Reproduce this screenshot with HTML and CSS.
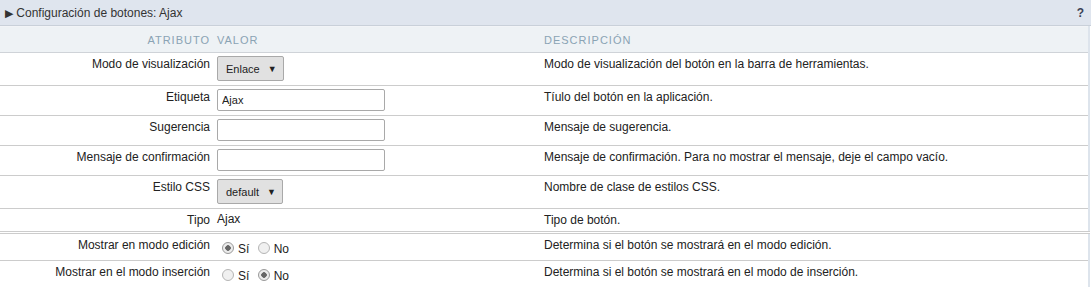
FILE: index.html
```html
<!DOCTYPE html>
<html lang="es">
<head>
    <meta charset="UTF-8">
    <title>Configuración de botones</title>
    <link rel="stylesheet" href="styles.css">
</head>
<body>
    <div class="panel">
        <div class="panel-title">
            <span class="caption"><span class="arrow">&#9654;</span> Configuración de botones: Ajax</span>
            <span class="help">?</span>
        </div>

        <table class="props">
            <thead>
                <tr>
                    <th class="col-attr">Atributo</th>
                    <th class="col-val">Valor</th>
                    <th class="col-desc">Descripción</th>
                </tr>
            </thead>
            <tbody>
                <tr>
                    <td class="col-attr">Modo de visualización</td>
                    <td class="col-val"><span class="select">Enlace <span class="caret">&#9660;</span></span></td>
                    <td class="col-desc">Modo de visualización del botón en la barra de herramientas.</td>
                </tr>
                <tr>
                    <td class="col-attr">Etiqueta</td>
                    <td class="col-val"><input class="text" type="text" value="Ajax"></td>
                    <td class="col-desc">Tíulo del botón en la aplicación.</td>
                </tr>
                <tr>
                    <td class="col-attr">Sugerencia</td>
                    <td class="col-val"><input class="text" type="text" value=""></td>
                    <td class="col-desc">Mensaje de sugerencia.</td>
                </tr>
                <tr>
                    <td class="col-attr">Mensaje de confirmación</td>
                    <td class="col-val"><input class="text" type="text" value=""></td>
                    <td class="col-desc">Mensaje de confirmación. Para no mostrar el mensaje, deje el campo vacío.</td>
                </tr>
                <tr>
                    <td class="col-attr">Estilo CSS</td>
                    <td class="col-val"><span class="select">default <span class="caret">&#9660;</span></span></td>
                    <td class="col-desc">Nombre de clase de estilos CSS.</td>
                </tr>
                <tr>
                    <td class="col-attr">Tipo</td>
                    <td class="col-val">Ajax</td>
                    <td class="col-desc">Tipo de botón.</td>
                </tr>
                <tr class="split radios">
                    <td class="col-attr">Mostrar en modo edición</td>
                    <td class="col-val">
                        <label class="radio"><span class="dot on"></span>Sí</label>
                        <label class="radio"><span class="dot"></span>No</label>
                    </td>
                    <td class="col-desc">Determina si el botón se mostrará en el modo edición.</td>
                </tr>
                <tr class="radios">
                    <td class="col-attr">Mostrar en el modo inserción</td>
                    <td class="col-val">
                        <label class="radio"><span class="dot"></span>Sí</label>
                        <label class="radio"><span class="dot on"></span>No</label>
                    </td>
                    <td class="col-desc">Determina si el botón se mostrará en el modo de inserción.</td>
                </tr>
            </tbody>
        </table>
    </div>
</body>
</html>
```

FILE: styles.css
```css
body {
    margin: 0;
    font-family: "Liberation Sans", Arial, sans-serif;
    font-size: 12px;
    color: #222;
    background: #fff;
}

.panel {
    width: 1091px;
}

/* Title bar */
.panel-title {
    display: flex;
    justify-content: space-between;
    align-items: center;
    height: 25px;
    padding: 0 7px 0 5px;
    background: #dfe5ee;
    border-bottom: 1px solid #c9d0d9;
    font-size: 12px;
    color: #333;
}

.arrow {
    font-size: 11px;
    color: #333;
}

.help {
    font-weight: bold;
    font-size: 12px;
    color: #3b4256;
}

/* Property table */
.props {
    width: 1090px;
    border-collapse: collapse;
    border-top: 1px solid #f2f4f7;
    border-right: 2px solid #dde4ec;
    border-bottom: 2px solid #dde4ec;
}

.props th {
    height: 25px;
    padding: 0 4px;
    background: #eef2f5;
    border-bottom: 1px solid #cfd3d8;
    font-size: 11px;
    font-weight: normal;
    letter-spacing: 1px;
    text-transform: uppercase;
    color: #8aa3b4;
    text-align: left;
}

.props td {
    padding: 3px 4px 4px;
    border-bottom: 1px solid #cccccc;
    vertical-align: top;
    line-height: 14px;
}

.props td.col-attr,
.props td.col-desc {
    padding-top: 4px;
}

.props .col-attr {
    width: 206px;
    padding-right: 3px;
    text-align: right;
}

.props th.col-attr {
    text-align: right;
    padding-right: 3px;
}

.props .col-val {
    width: 319px;
}

.props tr.split td {
    border-top: 3px double #cccccc;
}

.props tr.radios td {
    padding-bottom: 3px;
}

.props tr:last-child td {
    border-bottom: none;
}

/* Form controls */
.select {
    display: inline-flex;
    align-items: center;
    gap: 8px;
    height: 23px;
    padding: 0 6px 0 8px;
    background: #e1e1e1;
    border: 1px solid #a9a9a9;
    border-radius: 2px;
    font-size: 11px;
    color: #222;
}

.caret {
    font-size: 9px;
}

.text {
    display: block;
    box-sizing: border-box;
    width: 168px;
    height: 22px;
    margin: 0;
    padding: 0 4px;
    border: 1px solid #a9a9a9;
    border-radius: 2px;
    font-family: "Liberation Sans", Arial, sans-serif;
    font-size: 11px;
    color: #222;
}

.radio {
    display: inline-flex;
    align-items: flex-end;
    margin: 0 5px 0 5px;
    padding-top: 5px;
}

.radio + .radio {
    margin-left: 0;
}

.dot {
    box-sizing: border-box;
    width: 12px;
    height: 12px;
    margin-right: 4px;
    margin-bottom: 2px;
    border: 1px solid #b5b5b5;
    border-radius: 50%;
    background: #f0f0f0;
}

.dot.on {
    background: radial-gradient(circle, #666 0 2.5px, #ececec 3px);
    border-color: #9a9a9a;
}
```
